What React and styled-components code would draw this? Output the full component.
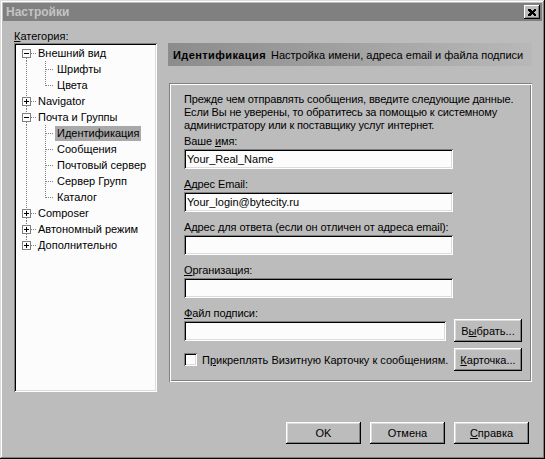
import React from "react";
import styled, { createGlobalStyle } from "styled-components";

const GlobalStyle = createGlobalStyle`
  html, body {
    margin: 0;
    padding: 0;
    background: #bcbcbc;
  }
  * {
    box-sizing: border-box;
  }
`;

const tree = [
  { label: "Внешний вид", open: true, children: ["Шрифты", "Цвета"] },
  { label: "Navigator", open: false },
  {
    label: "Почта и Группы",
    open: true,
    children: ["Идентификация", "Сообщения", "Почтовый сервер", "Сервер Групп", "Каталог"],
  },
  { label: "Composer", open: false },
  { label: "Автономный режим", open: false },
  { label: "Дополнительно", open: false },
];

const fields = [
  { label: "Ваше ", key: "и", rest: "мя:", value: "Your_Real_Name" },
  { label: "", key: "А", rest: "дрес Email:", value: "Your_login@bytecity.ru" },
  { label: "Адрес ", key: "д", rest: "ля ответа (если он отличен от адреса email):", value: "" },
  { label: "", key: "О", rest: "рганизация:", value: "" },
];

const RootConnector = ({ first, last, open }) => (
  <svg width="20" height="16" shapeRendering="crispEdges">
    <g stroke="#808080" strokeDasharray="1 1">
      {!first && <line x1="10.5" y1="0" x2="10.5" y2="4" />}
      {!last && <line x1="10.5" y1="13" x2="10.5" y2="16" />}
      <line x1="15" y1="8.5" x2="20" y2="8.5" />
    </g>
    <rect x="6.5" y="4.5" width="8" height="8" fill="#fcfcfc" stroke="#808080" />
    <line x1="8" y1="8.5" x2="13" y2="8.5" stroke="#000" />
    {!open && <line x1="10.5" y1="6" x2="10.5" y2="11" stroke="#000" />}
  </svg>
);

const ChildConnector = ({ lastChild }) => (
  <svg width="39" height="16" shapeRendering="crispEdges">
    <g stroke="#808080" strokeDasharray="1 1">
      <line x1="10.5" y1="0" x2="10.5" y2="16" />
      <line x1="29.5" y1="0" x2="29.5" y2={lastChild ? 9 : 16} />
      <line x1="30" y1="8.5" x2="38" y2="8.5" />
    </g>
  </svg>
);

const Key = ({ children }) => <u>{children}</u>;

export default function App() {
  return (
    <>
      <GlobalStyle />
      <Window>
        <TitleBar>
          <Title>Настройки</Title>
          <CloseButton>
            <svg width="8" height="7" shapeRendering="crispEdges">
              <path d="M0 0h2l2 2 2-2h2v1L6 3.5 8 6v1H6L4 5 2 7H0V6l2-2.5L0 1z" fill="#000" />
            </svg>
          </CloseButton>
        </TitleBar>

        <Columns>
          <LeftColumn>
            <Caption>
              <Key>К</Key>атегория:
            </Caption>
            <Tree>
              {tree.map((node, i) => (
                <React.Fragment key={node.label}>
                  <TreeRow>
                    <RootConnector first={i === 0} last={i === tree.length - 1} open={node.open} />
                    <TreeLabel>{node.label}</TreeLabel>
                  </TreeRow>
                  {node.open &&
                    node.children.map((child, j) => (
                      <TreeRow key={child}>
                        <ChildConnector lastChild={j === node.children.length - 1} />
                        <TreeLabel selected={child === "Идентификация"}>{child}</TreeLabel>
                      </TreeRow>
                    ))}
                </React.Fragment>
              ))}
            </Tree>
          </LeftColumn>

          <RightColumn>
            <Banner>
              <BannerTitle>Идентификация</BannerTitle>
              <span>Настройка имени, адреса email и файла подписи</span>
            </Banner>

            <GroupBox>
              <Intro>
                Прежде чем отправлять сообщения, введите следующие данные.
                <br />
                Если Вы не уверены, то обратитесь за помощью к системному
                <br />
                администратору или к поставщику услуг интернет.
              </Intro>

              {fields.map((f) => (
                <Field key={f.rest}>
                  <FieldLabel>
                    {f.label}
                    <Key>{f.key}</Key>
                    {f.rest}
                  </FieldLabel>
                  <TextBox>{f.value}</TextBox>
                </Field>
              ))}

              <FieldLabel>
                <Key>Ф</Key>айл подписи:
              </FieldLabel>
              <InlineRow>
                <TextBox narrow />
                <Button small>
                  В<Key>ы</Key>брать...
                </Button>
              </InlineRow>

              <InlineRow spaced>
                <CheckLine>
                  <CheckBox />
                  <span>
                    П<Key>р</Key>икреплять Визитную Карточку к сообщениям.
                  </span>
                </CheckLine>
                <Button small>
                  <Key>К</Key>арточка...
                </Button>
              </InlineRow>
            </GroupBox>
          </RightColumn>
        </Columns>

        <Footer>
          <Button>OK</Button>
          <Button>Отмена</Button>
          <Button>
            <Key>С</Key>правка
          </Button>
        </Footer>
      </Window>
    </>
  );
}

const Window = styled.div`
  width: 545px;
  height: 459px;
  padding: 3px;
  background: #bcbcbc;
  font-family: "Liberation Sans", Arial, sans-serif;
  font-size: 11px;
  color: #000;
  box-shadow: inset -1px -1px 0 #000, inset 1px 1px 0 #dcdcdc, inset -2px -2px 0 #808080,
    inset 2px 2px 0 #fff;
  display: flex;
  flex-direction: column;
`;

const TitleBar = styled.div`
  height: 18px;
  background: #808080;
  display: flex;
  align-items: center;
  justify-content: space-between;
  padding: 0 2px 0 3px;
`;

const Title = styled.div`
  color: #c4c4c4;
  font-weight: bold;
  font-size: 12px;
`;

const CloseButton = styled.div`
  width: 16px;
  height: 14px;
  background: #bcbcbc;
  display: flex;
  align-items: center;
  justify-content: center;
  box-shadow: inset -1px -1px 0 #000, inset 1px 1px 0 #fff, inset -2px -2px 0 #808080;
`;

const Columns = styled.div`
  display: flex;
  gap: 11px;
  margin-top: 9px;
  padding-left: 11px;
`;

const LeftColumn = styled.div`
  width: 143px;
  display: flex;
  flex-direction: column;
`;

const Caption = styled.div`
  height: 13px;
  line-height: 12px;
`;

const Tree = styled.div`
  height: 349px;
  background: #fcfcfc;
  padding: 2px;
  box-shadow: inset 1px 1px 0 #808080, inset -1px -1px 0 #fff, inset 2px 2px 0 #000,
    inset -2px -2px 0 #dcdcdc;
`;

const TreeRow = styled.div`
  height: 16px;
  display: flex;
  align-items: center;
  svg {
    flex: none;
  }
`;

const TreeLabel = styled.span`
  padding: 1px 2px;
  line-height: 13px;
  white-space: nowrap;
  background: ${({ selected }) => (selected ? "#a9a9a9" : "transparent")};
`;

const RightColumn = styled.div`
  width: 364px;
  padding-top: 13px;
  display: flex;
  flex-direction: column;
  gap: 17px;
`;

const Banner = styled.div`
  height: 23px;
  display: flex;
  align-items: center;
  gap: 5px;
  padding-left: 5px;
  background: linear-gradient(to right, #8c8c8c 0%, #a4a4a4 55%, #b8b8b8 100%);
  white-space: nowrap;
`;

const BannerTitle = styled.span`
  font-weight: bold;
  letter-spacing: 0.4px;
`;

const GroupBox = styled.div`
  margin-left: 1px;
  width: 363px;
  height: 299px;
  padding: 10px 9px 0 15px;
  box-shadow: inset 1px 1px 0 #808080, inset -1px -1px 0 #fff, inset 2px 2px 0 #fff,
    inset -2px -2px 0 #808080;
  display: flex;
  flex-direction: column;
`;

const Intro = styled.div`
  line-height: 13px;
  margin-bottom: 3px;
  white-space: nowrap;
  letter-spacing: -0.15px;
`;

const Field = styled.div`
  display: flex;
  flex-direction: column;
  margin-bottom: 9px;
`;

const FieldLabel = styled.div`
  height: 13px;
  line-height: 13px;
  margin-bottom: 1px;
  white-space: nowrap;
  letter-spacing: -0.1px;
`;

const TextBox = styled.div`
  width: ${({ narrow }) => (narrow ? "262px" : "269px")};
  height: 20px;
  padding: 3px 3px 0;
  line-height: 14px;
  background: #fcfcfc;
  box-shadow: inset 1px 1px 0 #808080, inset -1px -1px 0 #fff, inset 2px 2px 0 #000,
    inset -2px -2px 0 #dcdcdc;
`;

const InlineRow = styled.div`
  display: flex;
  align-items: center;
  justify-content: space-between;
  margin-top: ${({ spaced }) => (spaced ? "6px" : "-2px")};
  width: 338px;
`;

const CheckLine = styled.div`
  display: flex;
  align-items: center;
  gap: 5px;
  white-space: nowrap;
`;

const CheckBox = styled.div`
  width: 13px;
  height: 13px;
  background: #fcfcfc;
  box-shadow: inset 1px 1px 0 #808080, inset -1px -1px 0 #fff, inset 2px 2px 0 #000,
    inset -2px -2px 0 #dcdcdc;
`;

const Button = styled.div`
  width: ${({ small }) => (small ? "68px" : "75px")};
  height: ${({ small }) => (small ? "23px" : "22px")};
  display: flex;
  align-items: center;
  justify-content: center;
  background: #bcbcbc;
  box-shadow: inset -1px -1px 0 #000, inset 1px 1px 0 #fff, inset -2px -2px 0 #808080,
    inset 2px 2px 0 #dcdcdc;
  white-space: nowrap;
`;

const Footer = styled.div`
  display: flex;
  justify-content: flex-end;
  gap: 9px;
  margin-top: 30px;
  padding-right: 13px;
`;
